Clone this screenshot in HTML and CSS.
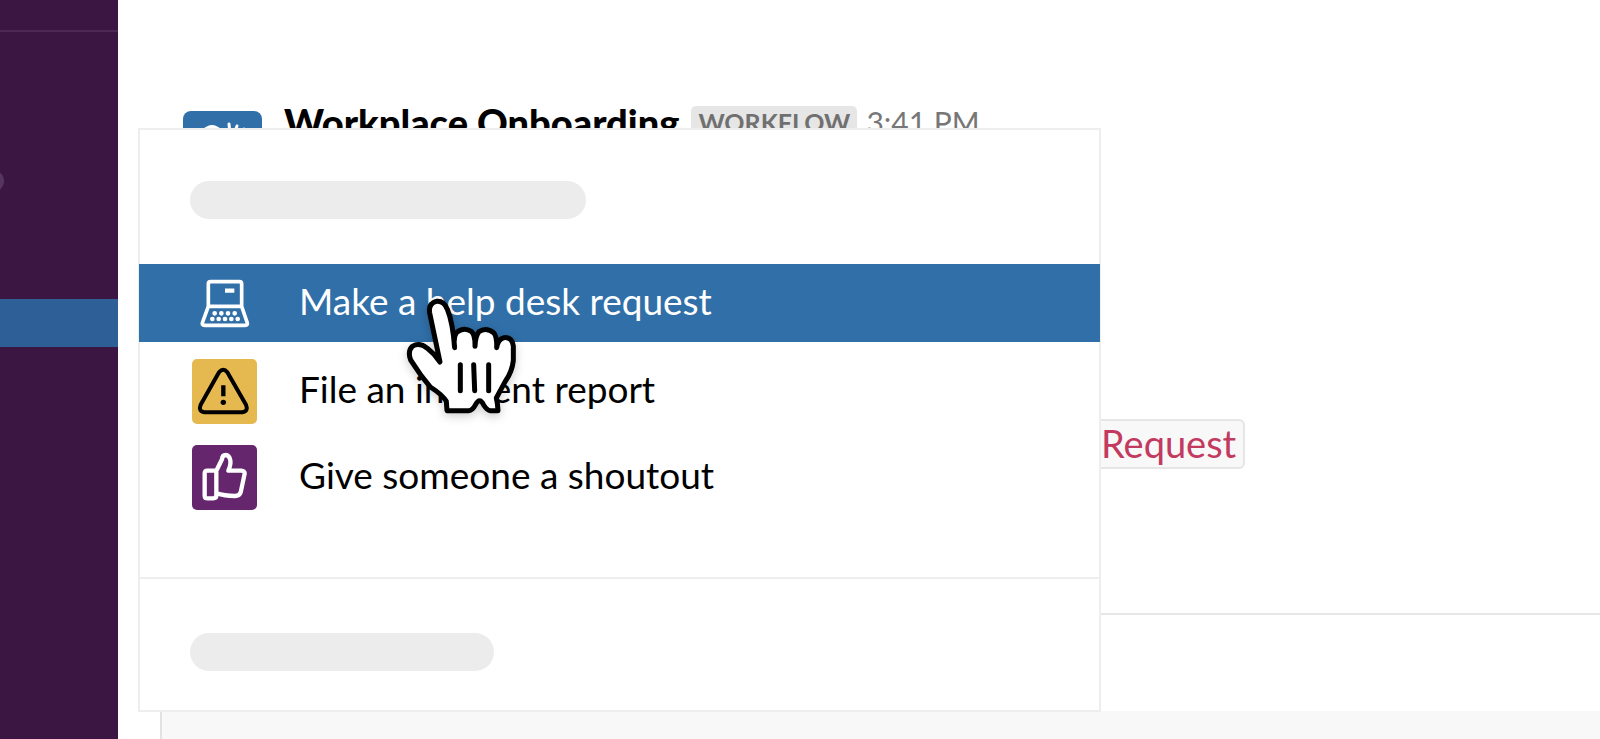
FILE: index.html
```html
<!DOCTYPE html>
<html lang="en">
<head>
<meta charset="utf-8">
<title>Workplace Onboarding</title>
<link rel="stylesheet" href="styles.css">
</head>
<body>
<div class="app">
  <nav class="sidebar" aria-label="Channels">
    <div class="sidebar-head"></div>
    <div class="sidebar-list"><span class="sidebar-pill"></span></div>
    <div class="sidebar-active"></div>
  </nav>
  <main class="main">
    <section class="messages">
      <article class="message">
        <span class="avatar">
          <svg viewBox="0 0 79 79" fill="none" stroke="#fff" stroke-width="4" stroke-linecap="round" aria-hidden="true">
            <path d="M21 20Q29 12 37 20" stroke-width="4"/>
            <path d="M46 13l1 10M54 15l-3 8M61 18l-5 8" stroke-width="3"/>
            <path d="M19 24v26q0 12 12 12h16q12 0 12-14V34"/>
          </svg>
        </span>
        <div class="message-head">
          <strong class="author">Workplace Onboarding</strong>
          <span class="tag">WORKFLOW</span>
          <time class="time">3:41 PM</time>
        </div>
      </article>
      <p class="message-body"><code class="code">Request</code></p>
    </section>
    <footer class="footer"><div class="composer"></div></footer>

    <div class="menu">
      <div class="menu-head"><div class="bar bar-long"></div></div>
      <div class="menu-list">
        <button class="item item-active" type="button">
          <svg class="icon" viewBox="37 33 195 195" fill="none" stroke="#fff" stroke-width="11" stroke-linejoin="round" stroke-linecap="round" aria-hidden="true">
            <path d="M86 139V72q0-7 7-7h86q7 0 7 7v67zM86 139L69 186q-4 10 6 10h121q10 0 6-10l-16-47"/>
            <path d="M136 92h28" stroke-width="13" stroke-linecap="butt"/>
            <path d="M105 160h.1M125 160h.1M145 160h.1M165 160h.1M98 177h.1M117 177h.1M136 177h.1M155 177h.1M174 177h.1" stroke-width="14"/>
          </svg>
          <span class="label">Make a help desk request</span>
        </button>
        <button class="item" type="button">
          <svg class="icon icon-yellow" viewBox="37 297 195 195" fill="none" stroke="#000" stroke-width="12" stroke-linejoin="round" stroke-linecap="round" aria-hidden="true">
            <path d="M118 337Q131 322 143 337L199 434Q207 454 188 457H74Q55 454 63 434Z"/>
            <path d="M131 376v33" stroke-width="13" stroke-linecap="butt"/>
            <circle cx="131" cy="427" r="8" fill="#000" stroke="none"/>
          </svg>
          <span class="label">File an incident report</span>
        </button>
        <button class="item" type="button">
          <svg class="icon icon-purple" viewBox="37 556 195 195" fill="none" stroke="#fff" stroke-width="13" stroke-linejoin="round" stroke-linecap="round" aria-hidden="true">
            <path d="M110 637V707Q110 716 101 716H84Q75 716 75 708V641Q75 633 83 633H110L127 599Q128 586 138 586Q149 587 152 602Q154 615 146 633H185Q196 634 195 642L183 698Q180 708 166 709Q134 708 111 701"/>
          </svg>
          <span class="label">Give someone a shoutout</span>
        </button>
      </div>
      <div class="menu-foot"><div class="bar bar-short"></div></div>
    </div>

    <svg class="pointer" viewBox="75 51 345 360" fill="#fff" stroke="#000" stroke-width="15" stroke-linejoin="round" stroke-linecap="round" aria-hidden="true">
      <path d="M180 246L149 99Q144 70 170 64Q192 62 202 88Q218 126 224 203Q219 172 230 157Q251 140 274 154Q286 165 285 199Q286 168 297 155Q318 141 341 158Q351 168 350 203Q354 178 372 173Q396 170 400 198V242Q396 276 377 302L349 354Q353 369 354 392H331Q321 391 311 375Q299 349 286 375Q278 391 266 392H201L199 364Q187 344 151 321L123 286L92 240Q82 215 97 199Q119 186 142 205Q164 222 180 246Z"/>
      <path d="M241 254v78M281 254l3 78M326 254v78" fill="none"/>
    </svg>
  </main>
</div>
</body>
</html>
```
FILE: styles.css
```css
* { box-sizing: border-box; }
body { margin: 0; background: #fff; color: #000; font-family: Lato, sans-serif; font-size: 37px; }
.app { display: grid; grid-template-columns: 118px 1fr; height: 100vh; overflow: hidden; }
.sidebar { background: #3b1643; }
.sidebar-head { height: 32px; border-bottom: 2px solid #4c2853; }
.sidebar-list { height: 267px; padding-top: 138px; overflow: hidden; }
.sidebar-pill { display: block; width: 24px; height: 22px; margin-left: -20px; border-radius: 11px; background: #563560; }
.sidebar-active { height: 48px; background: #2f5f97; }

.main { position: relative; display: flex; flex-direction: column; min-width: 0; }
.messages { flex: 1; padding: 99px 0 0 65px; }
.message { display: flex; gap: 22px; }
.avatar { width: 79px; height: 79px; margin-top: 12px; border-radius: 8px; background: #306fa8; }
.avatar svg { display: block; width: 100%; }
.message-head { display: flex; align-items: flex-start; gap: 12px; white-space: nowrap; line-height: 46px; }
.author { font-size: 38px; font-weight: 900; }
.tag { margin-top: 7px; padding: 0 7px; border-radius: 5px; background: #e6e6e6; color: #707070; font-size: 25px; font-weight: 700; line-height: 32px; }
.time { margin-left: -3px; color: #777; font-size: 30px; }
.message-body { margin: 229px 0 0; padding-left: 900px; line-height: 48px; }
.code { display: inline-block; padding: 0 7px 2px 16px; border: 2px solid #e6e6e6; border-radius: 6px; background: #f8f8f8; color: #c23a60; font-family: inherit; font-size: 38px; line-height: 44px; }
.footer { margin-left: 20px; padding: 96px 0 0 22px; border-top: 2px solid #e6e6e6; }
.composer { height: 28px; border-left: 2px solid #e2e2e2; background: #f8f8f8; }

.menu { position: absolute; top: 128px; left: 20px; width: 963px; border: 2px solid #eee; background: #fff; }
.menu-head { padding: 51px 50px 45px; }
.bar { height: 38px; border-radius: 19px; background: #ececec; }
.bar-long { width: 396px; }
.bar-short { width: 304px; }
.menu-list { display: flex; flex-direction: column; padding-bottom: 57px; }
.item { display: flex; align-items: center; gap: 42px; height: 86px; margin: 0; padding: 0 52px; border: 0; background: none; color: #000; font: inherit; text-align: left; }
.item-active { height: 78px; margin: 0 -1px 6px; padding: 0 53px; background: #306fa8; color: #fff; }
.icon { flex: none; width: 65px; height: 65px; border-radius: 5px; }
.icon-yellow { background: #e5b94f; }
.icon-purple { background: #65266e; }
.label { line-height: 44px; padding-bottom: 5px; }
.menu-foot { padding: 54px 50px 39px; border-top: 2px solid #eee; }
.pointer { position: absolute; top: 297px; left: 287px; width: 115px; height: 120px; filter: drop-shadow(0 3px 5px rgba(0, 0, 0, 0.2)); }
```
